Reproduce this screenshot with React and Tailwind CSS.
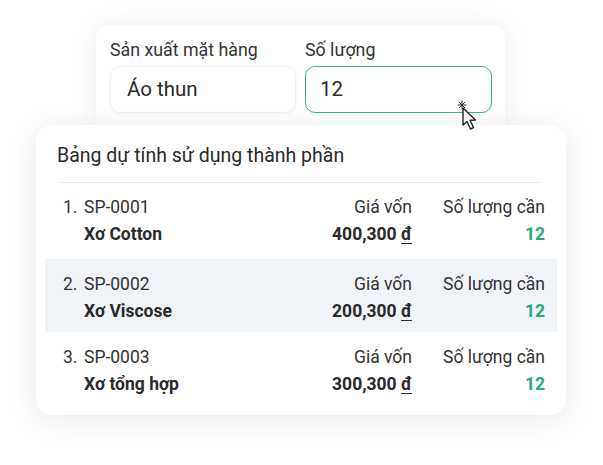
import React from 'react'

const rows = [
  { no: '1.', code: 'SP-0001', name: 'Xơ Cotton', price: '400,300', qty: 12, first: true },
  { no: '2.', code: 'SP-0002', name: 'Xơ Viscose', price: '200,300', qty: 12, active: true },
  { no: '3.', code: 'SP-0003', name: 'Xơ tổng hợp', price: '300,300', qty: 12 },
]

function Cursor() {
  return (
    <svg className="absolute left-[455px] top-[99px]" width="30" height="34" viewBox="0 0 30 34">
      <g stroke="#333" strokeWidth="1" strokeLinecap="round">
        <line x1="7" y1="2" x2="7" y2="10" />
        <line x1="3" y1="6" x2="11" y2="6" />
        <line x1="4.2" y1="3.2" x2="9.8" y2="8.8" />
        <line x1="9.8" y1="3.2" x2="4.2" y2="8.8" />
      </g>
      <path
        d="M8 9 L8 26 L12 22.5 L15.5 30 L18.5 28.6 L15 21.3 L20.5 21 Z"
        fill="#fff"
        stroke="#222"
        strokeWidth="1.4"
        strokeLinejoin="round"
      />
    </svg>
  )
}

export default function App() {
  return (
    <div className="relative h-[465px] w-[603px] overflow-hidden bg-white pt-[25px] font-['Roboto','Liberation_Sans',sans-serif] text-[#2d2d2d]">
      <div className="ml-[96px] w-[409px] rounded-[12px] bg-white px-[14px] pb-[22px] pt-[13px] shadow-[0_0_24px_rgba(0,0,0,0.07)]">
        <div className="grid grid-cols-[186px_187px] gap-x-[9px]">
          <div className="text-[17.8px] leading-[23px] text-[#333]">Sản xuất mặt hàng</div>
          <div className="text-[17.8px] leading-[23px] text-[#333]">Số lượng</div>
          <div className="mt-[5px] flex h-[47px] items-center rounded-[10px] border border-[#f1f1f1] bg-white pl-[16px] text-[20.5px] text-[#2a2a2a] shadow-[0_1px_4px_rgba(0,0,0,0.04)]">
            Áo thun
          </div>
          <div className="mt-[5px] flex h-[47px] items-center rounded-[10px] border-[1.5px] border-[#3bb48c] bg-white pl-[14px] text-[20.5px] text-[#2a2a2a]">
            12
          </div>
        </div>
      </div>

      <div className="relative -mt-[10px] ml-[36px] h-[290px] w-[530px] rounded-[16px] bg-white px-[9px] pt-[18px] shadow-[0_4px_30px_rgba(0,0,0,0.09)]">
        <div className="pl-[12px] text-[19.5px] leading-[25px] text-[#2a2a2a]">Bảng dự tính sử dụng thành phần</div>
        <div className="mx-[15px] mt-[14px] h-px bg-[#ececec]" />
        <div>
          {rows.map((r) => (
            <div
              key={r.code}
              className={`grid grid-cols-[1fr_auto_133px] pl-[18px] pr-[12px] text-[17.5px] leading-[24px] ${r.first ? 'h-[76px] pt-[12px]' : 'h-[73px] pt-[13px]'} ${r.active ? 'bg-[#f0f4f9]' : ''}`}
            >
              <div>
                <div className="flex text-[#333]">
                  <span className="w-[21px]">{r.no}</span>
                  <span>{r.code}</span>
                </div>
                <div className="mt-[3px] pl-[21px] font-bold text-[#2a2a2a]">{r.name}</div>
              </div>
              <div className="text-right">
                <div className="text-[#333]">Giá vốn</div>
                <div className="mt-[3px] font-bold text-[#2a2a2a]">
                  {r.price} <span className="underline underline-offset-[3px]">đ</span>
                </div>
              </div>
              <div className="text-right">
                <div className="text-[#333]">Số lượng cần</div>
                <div className="mt-[3px] font-bold text-[#26a87a]">{r.qty}</div>
              </div>
            </div>
          ))}
        </div>
      </div>

      <Cursor />
    </div>
  )
}
